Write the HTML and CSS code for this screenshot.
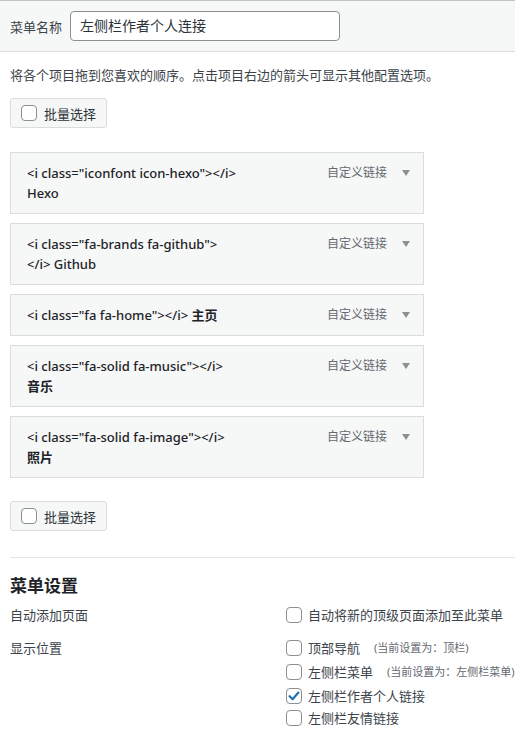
FILE: index.html
```html
<!DOCTYPE html>
<html lang="zh-CN">
<head>
<meta charset="utf-8">
<title>菜单</title>
<link rel="stylesheet" href="styles.css">
</head>
<body>
<div class="header">
  <span class="hlabel">菜单名称</span>
  <div class="name-input">左侧栏作者个人连接</div>
</div>
<div class="content">
  <p class="desc">将各个项目拖到您喜欢的顺序。点击项目右边的箭头可显示其他配置选项。</p>
  <div class="bulk"><span class="cb"></span><span>批量选择</span></div>
  <ul class="menu">
    <li class="item"><span class="title">&lt;i class="iconfont icon-hexo"&gt;&lt;/i&gt;<br>Hexo</span><span class="meta"><span class="type">自定义链接</span><span class="arrow"></span></span></li>
    <li class="item"><span class="title">&lt;i class="fa-brands fa-github"&gt;<br>&lt;/i&gt; Github</span><span class="meta"><span class="type">自定义链接</span><span class="arrow"></span></span></li>
    <li class="item"><span class="title">&lt;i class="fa fa-home"&gt;&lt;/i&gt; <b class="zh">主页</b></span><span class="meta"><span class="type">自定义链接</span><span class="arrow"></span></span></li>
    <li class="item"><span class="title">&lt;i class="fa-solid fa-music"&gt;&lt;/i&gt;<br><b class="zh">音乐</b></span><span class="meta"><span class="type">自定义链接</span><span class="arrow"></span></span></li>
    <li class="item"><span class="title">&lt;i class="fa-solid fa-image"&gt;&lt;/i&gt;<br><b class="zh">照片</b></span><span class="meta"><span class="type">自定义链接</span><span class="arrow"></span></span></li>
  </ul>
  <div class="bulk"><span class="cb"></span><span>批量选择</span></div>
  <div class="divider"></div>
  <h3 class="settings-title">菜单设置</h3>
  <div class="settings">
    <div class="slabel">自动添加页面</div>
    <div class="opts first">
      <div class="opt"><span class="cb"></span>自动将新的顶级页面添加至此菜单</div>
    </div>
    <div class="slabel second">显示位置</div>
    <div class="opts">
      <div class="opt"><span class="cb"></span>顶部导航<span class="note">(当前设置为：顶栏)</span></div>
      <div class="opt"><span class="cb"></span>左侧栏菜单<span class="note">(当前设置为：左侧栏菜单)</span></div>
      <div class="opt"><span class="cb checked"><svg viewBox="0 0 16 16" width="16" height="16"><path d="M3.6 8.2 L6.6 11.2 L12.4 4.6" fill="none" stroke="#2271b1" stroke-width="2.2" stroke-linecap="round" stroke-linejoin="round"/></svg></span>左侧栏作者个人链接</div>
      <div class="opt last"><span class="cb"></span>左侧栏友情链接</div>
    </div>
  </div>
</div>
</body>
</html>
```

FILE: styles.css
```css
* { box-sizing: border-box; }
html, body { margin: 0; padding: 0; background: #fff; }
body {
  font-family: "Noto Sans", "Noto Sans CJK SC", sans-serif;
  font-size: 13px;
  color: #3c434a;
  width: 515px;
  overflow: hidden;
}
.header {
  height: 52px;
  background: #f6f7f7;
  border-top: 1px solid #c3c4c7;
  border-bottom: 1px solid #dcdcde;
  display: flex;
  align-items: center;
  padding-left: 10px;
  gap: 8px;
}
.hlabel { font-size: 13px; color: #3c434a; }
.name-input {
  width: 270px;
  height: 30px;
  border: 1px solid #8c8f94;
  border-radius: 4px;
  background: #fff;
  padding: 0 9px;
  font-size: 14px;
  line-height: 28px;
  color: #2c3338;
}
.content { padding-left: 10px; }
.desc { margin: 13px 0 0; line-height: 20px; }
.bulk {
  margin-top: 13px;
  width: 97px;
  height: 30px;
  border: 1px solid #dcdcde;
  border-radius: 3px;
  background: #f6f7f7;
  display: flex;
  align-items: center;
  padding-left: 10px;
  gap: 7px;
  color: #2c3338;
}
.cb {
  width: 16px;
  height: 16px;
  border: 1px solid #8c8f94;
  border-radius: 4px;
  background: #fff;
  flex: none;
  display: inline-flex;
  align-items: center;
  justify-content: center;
}
.cb svg { display: block; margin: -1px; }
.menu { list-style: none; margin: 24px 0 0; padding: 0; width: 414px; }
.item {
  border: 1px solid #dcdcde;
  background: #f6f7f7;
  padding: 10px 12px 10px 16px;
  margin-bottom: 9px;
  display: flex;
  justify-content: space-between;
  align-items: flex-start;
  line-height: 20px;
}
.title { font-weight: 500; color: #1d2327; font-size: 13px; }
.zh { font-weight: 700; }
.meta { display: flex; align-items: center; gap: 15px; }
.type { font-size: 12px; color: #646970; }
.arrow {
  width: 0; height: 0;
  border-left: 4px solid transparent;
  border-right: 4px solid transparent;
  border-top: 6px solid #8c8f94;
  margin-right: 1px;
}
.menu + .bulk { margin-top: 23px; }
.divider { margin-top: 26px; border-top: 1px solid #e5e5e5; width: 505px; }
.settings-title { margin: 16px 0 0; font-size: 17px; line-height: 24px; font-weight: 700; color: #1d2327; }
.settings {
  display: grid;
  grid-template-columns: 276px 1fr;
  margin-top: 5px;
}
.slabel { line-height: 24px; }
.slabel.second { margin-top: 9px; }
.opts:not(.first) { margin-top: 9px; }
.opt {
  display: flex;
  align-items: center;
  gap: 6px;
  line-height: 24px;
  white-space: nowrap;
  color: #3c434a;
}
.opt.last { margin-top: -2px; }
.note { font-size: 11px; color: #646970; margin-left: 8px; }
```
